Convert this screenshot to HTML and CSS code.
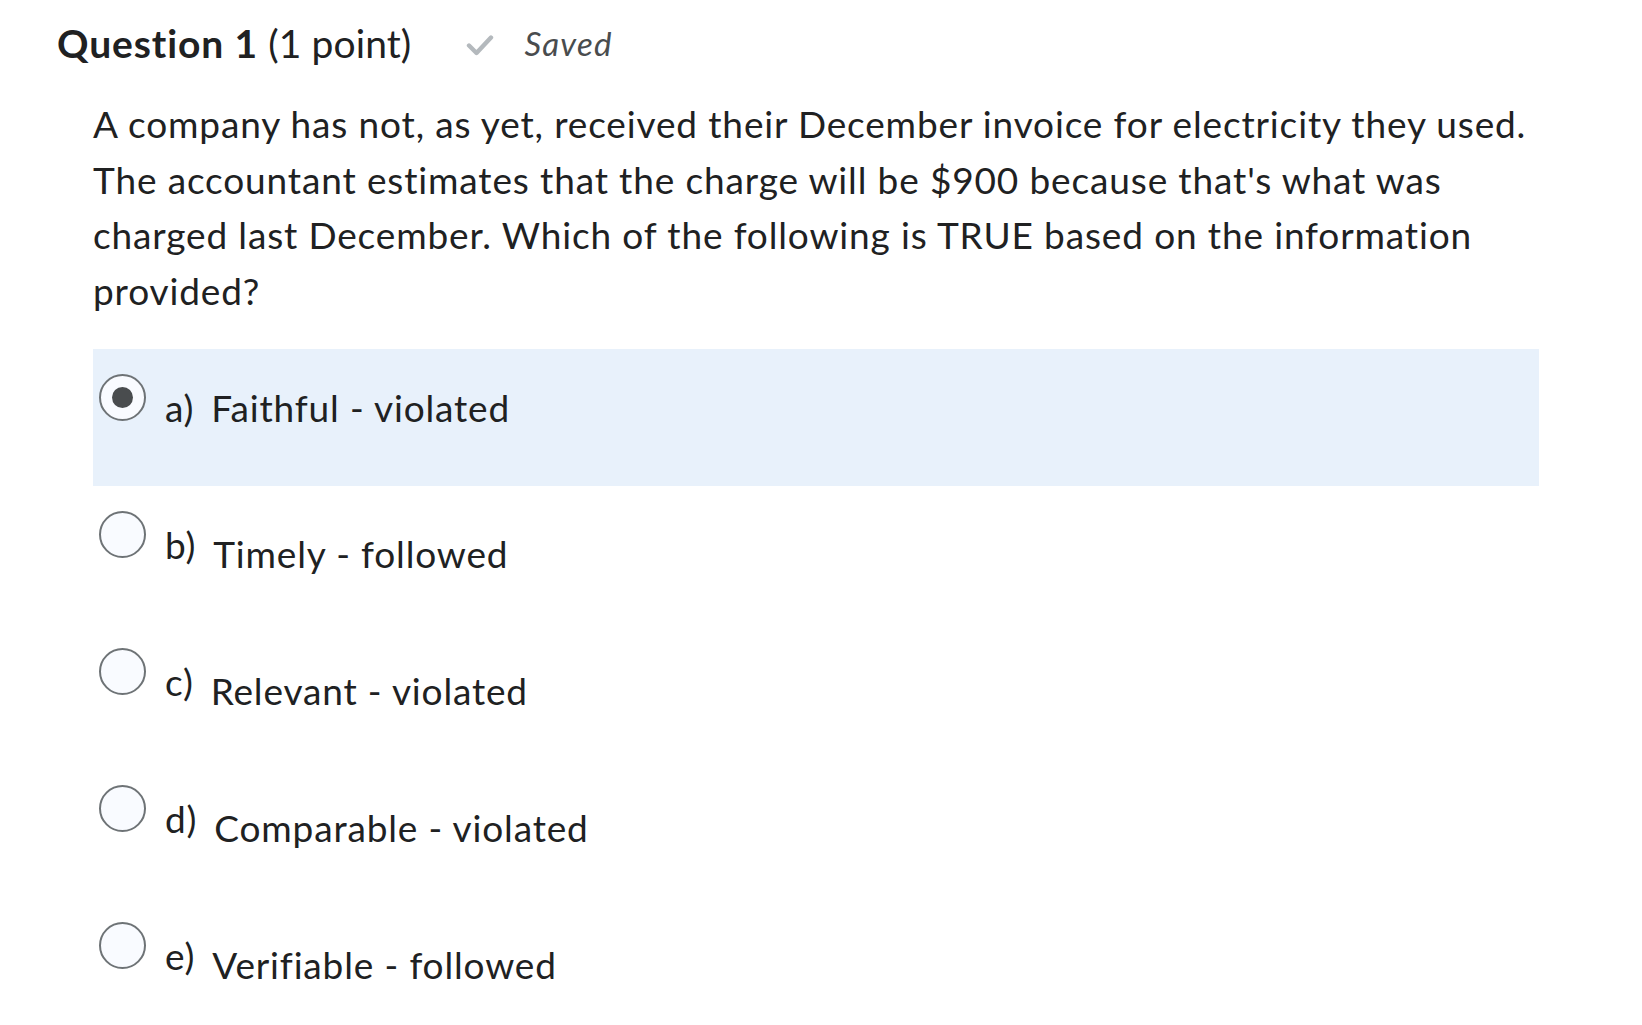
FILE: index.html
```html
<!DOCTYPE html>
<html lang="en">
<head>
<meta charset="utf-8">
<title>Question 1</title>
<link rel="stylesheet" href="styles.css">
</head>
<body>
<div class="page">
  <div class="q-header">
    <h1 class="q-title"><strong>Question 1</strong> <span class="q-points">(1 point)</span></h1>
    <div class="saved">
      <svg class="check" width="28" height="22" viewBox="0 0 28 22" aria-hidden="true">
        <path d="M3 11.5 L10.5 19 L25 3.5" fill="none" stroke="#b4b9bd" stroke-width="4.4" stroke-linecap="round" stroke-linejoin="round"/>
      </svg>
      <span class="saved-text">Saved</span>
    </div>
  </div>
  <div class="q-body">
    <p class="q-text">A company has not, as yet, received their December invoice for electricity they used. The accountant estimates that the charge will be $900 because that's what was charged last December. Which of the following is TRUE based on the information provided?</p>
    <div class="options">
      <div class="option selected">
        <span class="radio checked"><span class="dot"></span></span>
        <span class="opt-label">a)</span>
        <span class="opt-text inline">Faithful - violated</span>
      </div>
      <div class="option">
        <span class="radio"></span>
        <span class="opt-label">b)</span>
        <span class="opt-text">Timely - followed</span>
      </div>
      <div class="option">
        <span class="radio"></span>
        <span class="opt-label">c)</span>
        <span class="opt-text">Relevant - violated</span>
      </div>
      <div class="option">
        <span class="radio"></span>
        <span class="opt-label">d)</span>
        <span class="opt-text">Comparable - violated</span>
      </div>
      <div class="option">
        <span class="radio"></span>
        <span class="opt-label">e)</span>
        <span class="opt-text">Verifiable - followed</span>
      </div>
    </div>
  </div>
</div>
</body>
</html>
```
FILE: styles.css
```css
html, body {
  margin: 0;
  padding: 0;
  background: #ffffff;
}
body {
  font-family: Lato, "Open Sans", "Liberation Sans", sans-serif;
  color: #202122;
}
.page {
  padding-top: 22px;
}
.q-header {
  display: flex;
  align-items: center;
  padding-left: 57px;
  height: 43px;
}
.q-title {
  margin: 0;
  font-size: 39px;
  line-height: 43px;
  font-weight: 400;
  color: #202122;
  letter-spacing: 0.1px;
}
.q-title strong {
  font-weight: 700;
  letter-spacing: 0.9px;
}
.saved {
  display: flex;
  align-items: center;
  margin-left: 55px;
}
.check {
  display: block;
  margin-top: 3px;
}
.saved-text {
  margin-left: 30px;
  font-size: 33px;
  font-style: italic;
  letter-spacing: 1.2px;
  color: #494c4e;
  line-height: 43px;
}
.q-body {
  padding-left: 93px;
  width: 1446px;
}
.q-text {
  margin: 31px 0 0 0;
  font-size: 37px;
  line-height: 55.5px;
  letter-spacing: 0.86px;
  color: #202122;
}
.options {
  margin-top: 31px;
}
.option {
  display: flex;
  align-items: flex-start;
  height: 137px;
  padding-left: 6px;
  box-sizing: border-box;
}
.option.selected {
  background: #e8f1fb;
}
.radio {
  flex: none;
  width: 47px;
  height: 47px;
  box-sizing: border-box;
  border: 2px solid #6e7376;
  border-radius: 50%;
  background: #f9fbff;
  margin-top: 25px;
  display: flex;
  align-items: center;
  justify-content: center;
}
.dot {
  width: 21px;
  height: 21px;
  border-radius: 50%;
  background: #494c4e;
}
.opt-label {
  margin-left: 19px;
  margin-top: 37px;
  font-size: 37px;
  line-height: 44px;
  letter-spacing: 0.85px;
}
.opt-text {
  margin-left: 17px;
  margin-top: 46px;
  font-size: 37px;
  line-height: 44px;
  letter-spacing: 0.85px;
}
.opt-text.inline {
  margin-top: 37px;
}
```
